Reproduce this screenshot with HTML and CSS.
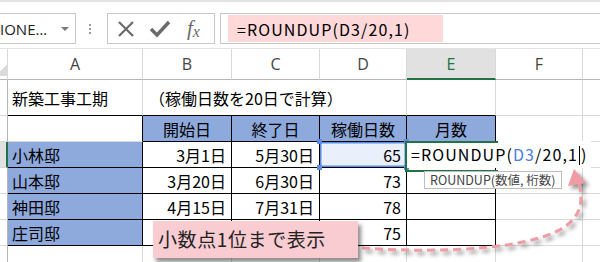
FILE: index.html
```html
<!DOCTYPE html>
<html lang="ja">

<head>
    <meta charset="UTF-8">
    <title>ROUNDUP</title>
    <link rel="stylesheet" href="styles.css">
</head>

<body>

    <div class="excel">
        <div class="formula-bar">
            <div class="name-box">
                <span class="name-box__text">IONE…</span>
                <span class="name-box__arrow"></span>
            </div>
            <div class="grip"></div>
            <div class="fx-buttons">
                <svg class="fx-buttons__icon" width="20" height="20" viewBox="0 0 20 20">
                    <path d="M3 3 L17 17 M17 3 L3 17" stroke="#6b6b6b" stroke-width="2.2" fill="none" />
                </svg>
                <svg class="fx-buttons__icon" width="22" height="20" viewBox="0 0 22 20">
                    <path d="M2 10 L8 16 L20 3" stroke="#6b6b6b" stroke-width="3.4" fill="none" />
                </svg>
                <span class="fx-buttons__fx">f<sub>x</sub></span>
            </div>
            <div class="formula-input">
                <span class="formula-input__text">=ROUNDUP(D3/20,1)</span>
            </div>
        </div>

        <div class="sheet">
            <!-- column headers -->
            <div class="ch ch--corner"></div>
            <div class="ch">A</div>
            <div class="ch">B</div>
            <div class="ch">C</div>
            <div class="ch">D</div>
            <div class="ch ch--active">E</div>
            <div class="ch">F</div>
            <div class="ch ch--last"></div>

            <!-- row 1 -->
            <div class="rh"></div>
            <div class="c c--bb">新築工事工期</div>
            <div class="c c--bb c--span3">（稼働日数を20日で計算）</div>
            <div class="c c--bb"></div>
            <div class="c"></div>
            <div class="c c--last"></div>

            <!-- row 2 -->
            <div class="rh"></div>
            <div class="c c--br"></div>
            <div class="c t t--head">開始日</div>
            <div class="c t t--head">終了日</div>
            <div class="c t t--head">稼働日数</div>
            <div class="c t t--head">月数</div>
            <div class="c"></div>
            <div class="c c--last"></div>

            <!-- row 3 -->
            <div class="rh rh--active"></div>
            <div class="c t t--name">小林邸</div>
            <div class="c t t--num">3月1日</div>
            <div class="c t t--num">5月30日</div>
            <div class="c t t--num t--ref">65
                <span class="handle handle--tl"></span>
                <span class="handle handle--tr"></span>
                <span class="handle handle--bl"></span>
                <span class="handle handle--br"></span>
            </div>
            <div class="c t t--edit">
                <div class="edit-box">=ROUNDUP(<span class="edit-box__ref">D3</span>/20,1<span class="edit-box__caret"></span>)</div>
            </div>
            <div class="c"></div>
            <div class="c c--last"></div>

            <!-- row 4 -->
            <div class="rh"></div>
            <div class="c t t--name">山本邸</div>
            <div class="c t t--num">3月20日</div>
            <div class="c t t--num">6月30日</div>
            <div class="c t t--num">73</div>
            <div class="c t"></div>
            <div class="c"></div>
            <div class="c c--last"></div>

            <!-- row 5 -->
            <div class="rh"></div>
            <div class="c t t--name">神田邸</div>
            <div class="c t t--num">4月15日</div>
            <div class="c t t--num">7月31日</div>
            <div class="c t t--num">78</div>
            <div class="c t"></div>
            <div class="c"></div>
            <div class="c c--last"></div>

            <!-- row 6 -->
            <div class="rh"></div>
            <div class="c t t--name">庄司邸</div>
            <div class="c t t--num"></div>
            <div class="c t t--num"></div>
            <div class="c t t--num">75</div>
            <div class="c t"></div>
            <div class="c"></div>
            <div class="c c--last"></div>

            <!-- row 7 -->
            <div class="rh"></div>
            <div class="c"></div>
            <div class="c"></div>
            <div class="c"></div>
            <div class="c"></div>
            <div class="c"></div>
            <div class="c"></div>
            <div class="c c--last"></div>
        </div>

        <div class="tooltip">ROUNDUP(数値, 桁数)</div>

        <svg class="arrow" width="600" height="262" viewBox="0 0 600 262">
            <path d="M362 246 C 450 252, 535 246, 566 224 C 584 210, 582 195, 579 182"
                stroke="#ef9ca4" stroke-width="3" stroke-dasharray="8 5" fill="none" />
            <polygon points="574,167 586,181 568,184" fill="#ef9ca4" />
        </svg>

        <div class="callout">小数点1位まで表示</div>
    </div>

</body>

</html>
```

FILE: styles.css
```css
* {
    margin: 0;
    padding: 0;
    box-sizing: border-box;
}

:root {
    --grid: #d9d9d9;
    --head-line: #c6c6c6;
    --green: #217346;
    --blue-cell: #8ea9db;
    --ref-blue: #5b8de4;
    --pink: #f8ccd0;
}

body {
    width: 600px;
    height: 262px;
    overflow: hidden;
    background: #fff;
    font-family: "Noto Sans CJK JP", sans-serif;
    color: #000;
}

.excel {
    position: relative;
    width: 600px;
    height: 262px;
    overflow: hidden;
    border-top: 2px solid #e3e3e3;
}

/* formula bar */

.formula-bar {
    display: flex;
    align-items: center;
    height: 46px;
    padding-top: 10px;
    padding-bottom: 3px;
}

.name-box {
    display: flex;
    align-items: center;
    justify-content: space-between;
    width: 76px;
    height: 31px;
    border: 1px solid var(--head-line);
    border-left: none;
    padding-right: 6px;
    font-family: "Open Sans", sans-serif;
    font-size: 15px;
    color: #222;
}

.name-box__arrow {
    width: 0;
    height: 0;
    border-left: 4px solid transparent;
    border-right: 4px solid transparent;
    border-top: 4px solid #7a7a7a;
}

.grip {
    width: 2px;
    height: 11px;
    margin-left: 13px;
    margin-right: 16px;
    background: radial-gradient(circle, #9a9a9a 1px, transparent 1px) 0 0 / 2px 4px;
}

.fx-buttons {
    display: flex;
    align-items: center;
    width: 108px;
    height: 31px;
    border: 1px solid var(--head-line);
    padding-left: 8px;
    gap: 13px;
}

.fx-buttons__fx {
    font-family: "Liberation Serif", serif;
    font-style: italic;
    font-size: 21px;
    color: #6b6b6b;
    margin-left: 3px;
}

.fx-buttons__fx sub {
    font-size: 16px;
    vertical-align: -2px;
}

.formula-input {
    flex: 1;
    height: 31px;
    margin-left: 5px;
    border: 1px solid var(--head-line);
    border-right: none;
    padding: 1px 0 1px 7px;
}

.formula-input__text {
    display: block;
    width: 215px;
    height: 100%;
    background: #ffd9d9;
    padding-left: 9px;
    font-size: 16px;
    letter-spacing: 1.1px;
    line-height: 28px;
}

/* sheet grid */

.sheet {
    display: grid;
    grid-template-columns: 8px 135px 89px 88px 87px 89px 87px 17px;
    grid-template-rows: 31px 36px 26px 26px 26px 26px 26px 26px;
    border-top: 1px solid #e3e3e3;
}

.ch {
    display: flex;
    align-items: center;
    justify-content: center;
    border-right: 1px solid var(--grid);
    border-bottom: 1px solid #b5b5b5;
    font-family: "Open Sans", sans-serif;
    font-size: 16px;
    color: #444;
}

.ch--corner {
    background: linear-gradient(135deg, transparent 55%, #dadada 55%) no-repeat 0 7px / 8px 20px;
    border-right-color: var(--grid);
}

.ch--active {
    background: #e1e1e1;
    color: var(--green);
    border-bottom: 2px solid var(--green);
}

.ch--last {
    border-right: none;
}

.rh {
    border-right: 1px solid #b5b5b5;
    border-bottom: 1px solid var(--grid);
}

.rh--active {
    background: #e1e1e1;
    border-right: 2px solid var(--green);
}

.c {
    display: flex;
    align-items: center;
    padding: 0 4px;
    white-space: nowrap;
    font-size: 16px;
    border-right: 1px solid var(--grid);
    border-bottom: 1px solid var(--grid);
}

.c--last {
    border-right: none;
}

.c--span3 {
    grid-column: span 3;
    padding-left: 6px;
}

.c--bb {
    border-bottom-color: #000;
}

.c--br {
    border-right-color: #000;
}

/* bordered table */

.t {
    border-right-color: #000;
    border-bottom-color: #000;
}

.t--head {
    justify-content: center;
    background: var(--blue-cell);
}

.t--name {
    background: var(--blue-cell);
}

.t--num {
    justify-content: flex-end;
    padding-right: 5px;
}

.t--ref {
    position: relative;
    background: #e9effb;
    box-shadow: inset 0 0 0 1.5px var(--ref-blue);
}

.handle {
    position: absolute;
    width: 5px;
    height: 5px;
    background: var(--ref-blue);
}

.handle--tl { left: -3px; top: -3px; }
.handle--tr { right: -3px; top: -3px; }
.handle--bl { left: -3px; bottom: -3px; }
.handle--br { right: -3px; bottom: -3px; }

.t--edit {
    position: relative;
}

.edit-box {
    position: absolute;
    left: -2px;
    top: -1px;
    width: 186px;
    height: 27px;
    background: #fff;
    padding-left: 6px;
    font-size: 16px;
    letter-spacing: 1.1px;
    line-height: 26px;
}

.edit-box::before {
    content: "";
    position: absolute;
    left: 0;
    top: 0;
    width: 91px;
    height: 27px;
    border: 2px solid var(--green);
    border-right: none;
}

.edit-box__ref {
    color: #4a7de0;
}

.edit-box__caret {
    display: inline-block;
    width: 1px;
    height: 19px;
    background: #000;
    vertical-align: -4px;
    margin-left: 1px;
    margin-right: 1px;
}

/* overlays */

.tooltip {
    position: absolute;
    left: 424px;
    top: 169px;
    width: 138px;
    height: 18px;
    border: 1px solid #bdbdbd;
    background: #fff;
    padding-left: 5px;
    font-size: 12.5px;
    line-height: 16px;
    color: #444;
    white-space: nowrap;
}

.arrow {
    position: absolute;
    left: 0;
    top: 0;
    filter: drop-shadow(3px 3px 2px rgba(0, 0, 0, 0.45));
}

.callout {
    position: absolute;
    left: 153px;
    top: 219px;
    width: 205px;
    height: 37px;
    background: var(--pink);
    box-shadow: 3px 4px 4px rgba(0, 0, 0, 0.45);
    padding-left: 5px;
    font-size: 19px;
    letter-spacing: 0.6px;
    line-height: 35px;
    color: #222;
    white-space: nowrap;
}
```
